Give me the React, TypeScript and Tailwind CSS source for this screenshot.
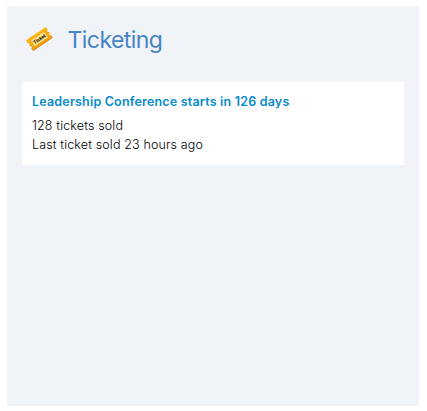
interface TicketEvent {
  name: string;
  daysUntil: number;
  ticketsSold: number;
  lastSold: string;
}

const events: TicketEvent[] = [
  { name: 'Leadership Conference', daysUntil: 126, ticketsSold: 128, lastSold: '23 hours ago' },
];

function TicketIcon() {
  return (
    <svg className="h-[27px] w-[27px] shrink-0" viewBox="0 0 27 27" fill="none">
      <defs>
        <linearGradient id="ticket" x1="0" y1="0" x2="0" y2="1">
          <stop offset="0" stopColor="#fbb712" />
          <stop offset="1" stopColor="#ee9a10" />
        </linearGradient>
      </defs>
      <g transform="translate(13.4 13) rotate(-34)">
        <path
          d="M-12 -6.4H12V-3.1Q10.8 -2.8 10.8 -1.8T12 -.6V.8Q10.8 1.1 10.8 2.1T12 3.3V6.4H-12V3.3Q-10.8 3 -10.8 2T-12 .8V-.6Q-10.8 -.9 -10.8 -1.9T-12 -3.1Z"
          fill="url(#ticket)"
        />
        <path d="M-11.8 6.1H11.8" stroke="#d47b08" strokeWidth=".6" />
        <rect x="-8.2" y="-3.6" width="16.4" height="7.2" fill="#ffe484" stroke="#dda023" strokeWidth=".4" />
        <text
          x="0"
          y="1.8"
          textAnchor="middle"
          textLength="13.6"
          lengthAdjust="spacingAndGlyphs"
          fontSize="5"
          fontWeight="900"
          fill="#352a10"
          fontFamily="Inter, sans-serif"
        >
          Ticket
        </text>
      </g>
    </svg>
  );
}

function EventCard({ event }: { event: TicketEvent }) {
  return (
    <div className="h-[83px] bg-white px-2.5 pt-2.5 text-[12.5px] leading-[19px] font-light text-black">
      <a href="#" className="mb-[5px] block font-semibold tracking-[0.015em] text-[#078bcb]">
        {event.name} starts in {event.daysUntil} days
      </a>
      <p className="tracking-[0.011em]">{event.ticketsSold} tickets sold</p>
      <p className="tracking-[0.011em]">Last ticket sold {event.lastSold}</p>
    </div>
  );
}

export default function App() {
  return (
    <div className="h-[411px] bg-white pt-1.5 pr-2 pl-[7px] font-['Inter',sans-serif]">
      <section className="h-[400px] bg-[#f0f4f9] px-[15px]">
        <header className="flex h-[76px] items-start gap-[14.5px] pt-5 pl-1">
          <TicketIcon />
          <h1 className="-mt-0.5 text-[23px] leading-8 tracking-[-0.024em] text-[#4684c4]">Ticketing</h1>
        </header>
        {events.map((event) => (
          <EventCard key={event.name} event={event} />
        ))}
      </section>
    </div>
  );
}
